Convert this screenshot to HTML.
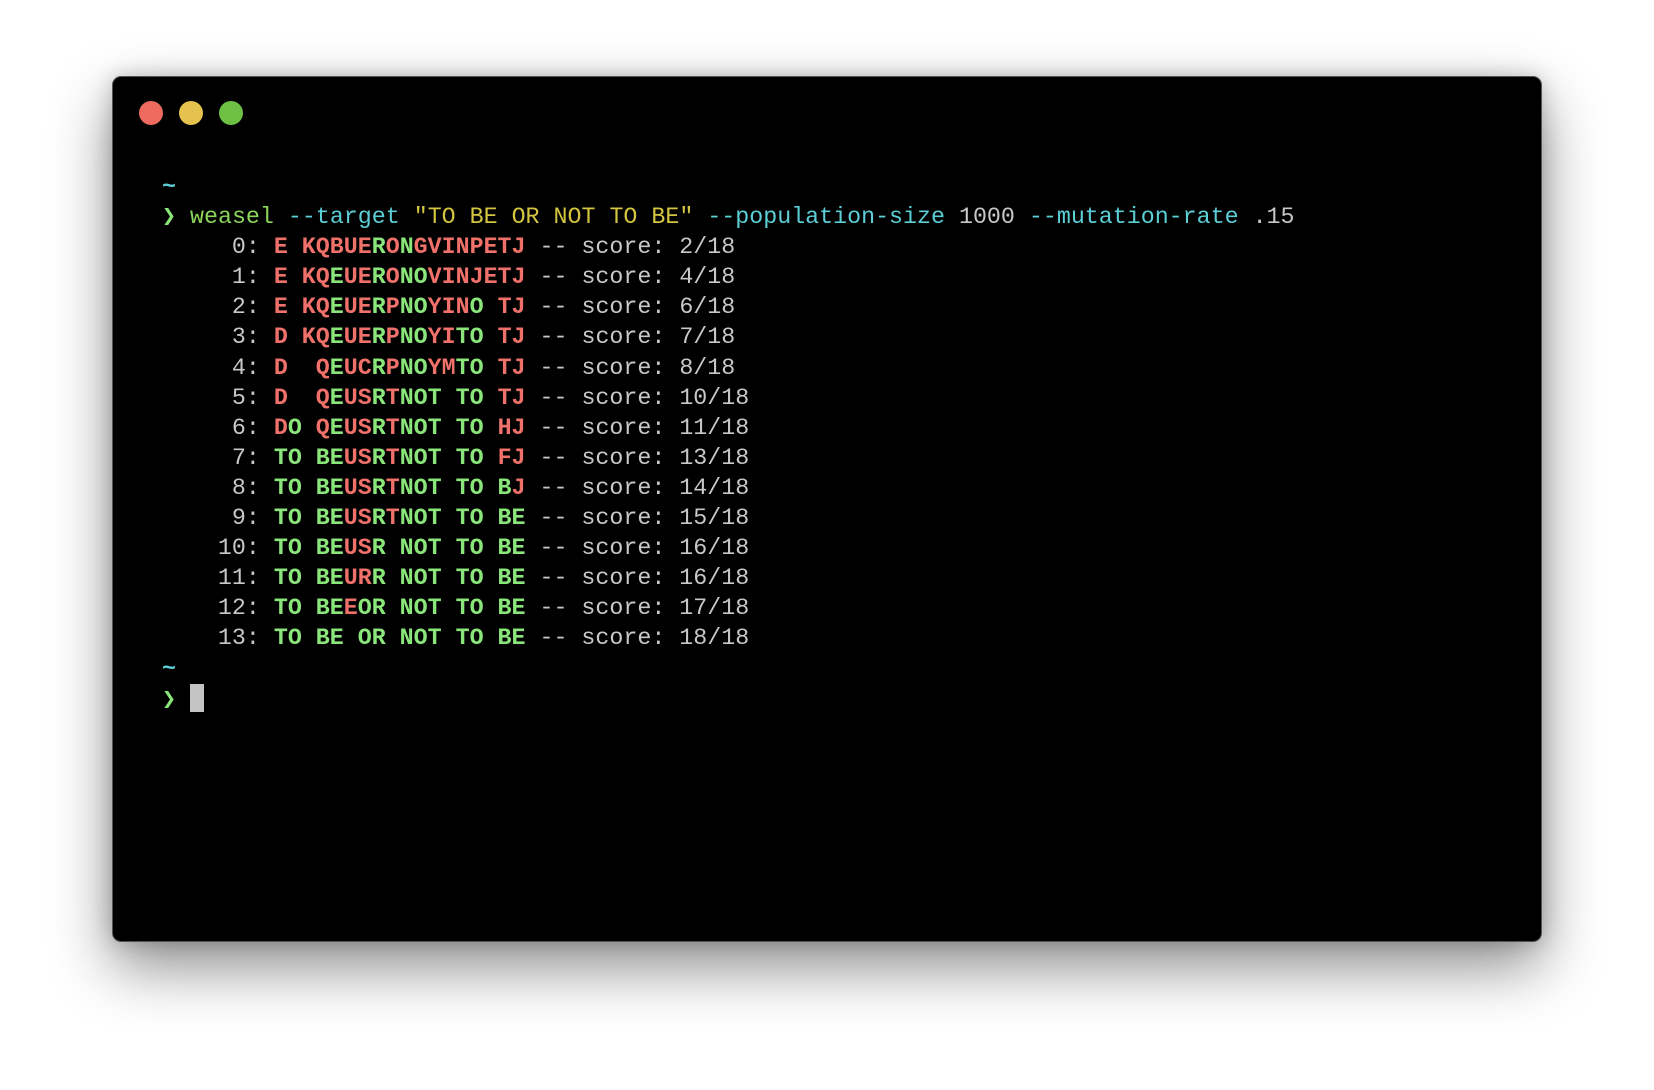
<!DOCTYPE html>
<html><head><meta charset="utf-8"><style>
html,body{margin:0;padding:0;background:#fff;width:1654px;height:1090px;overflow:hidden}
.win{position:absolute;left:112px;top:76px;width:1430px;height:866px;background:#000;border-radius:9px;border:1px solid #555;box-sizing:border-box;box-shadow:0 25px 60px rgba(0,0,0,0.45),0 0 20px rgba(0,0,0,0.2)}
.dot{position:absolute;top:101px;width:24px;height:24px;border-radius:50%}
pre{position:absolute;left:162px;top:172px;margin:0;font-family:"Liberation Mono",monospace;font-size:23.3px;line-height:30.1px;color:#c8c8c8}
.c{color:#5ccfd6}.t{color:#5ccfd6;font-weight:bold}.p{color:#8ae67a}.w{color:#8bd55a}.y{color:#d3c53f}
r{color:#f0706a;font-weight:bold}g{color:#8ae67a;font-weight:bold}
.cur{display:inline-block;width:14px;height:28px;background:#c4c4c4;vertical-align:-6px}
</style></head><body>
<div class="win"></div>
<div class="dot" style="left:139px;background:#ee6a5f"></div>
<div class="dot" style="left:179px;background:#e5c14e"></div>
<div class="dot" style="left:219px;background:#6ec044"></div>
<pre><span class="t">~</span>
<span class="p">❯</span> <span class="w">weasel</span> <span class="c">--target</span> <span class="y">"TO BE OR NOT TO BE"</span> <span class="c">--population-size</span> 1000 <span class="c">--mutation-rate</span> .15
     0: <r>E KQBUE</r><g>R</g><r>O</r><g>N</g><r>GVINPETJ</r> -- score: 2/18
     1: <r>E KQ</r><g>E</g><r>UE</r><g>R</g><r>O</r><g>NO</g><r>VINJETJ</r> -- score: 4/18
     2: <r>E KQ</r><g>E</g><r>UE</r><g>R</g><r>P</r><g>NO</g><r>YIN</r><g>O </g><r>TJ</r> -- score: 6/18
     3: <r>D KQ</r><g>E</g><r>UE</r><g>R</g><r>P</r><g>NO</g><r>YI</r><g>TO </g><r>TJ</r> -- score: 7/18
     4: <r>D  Q</r><g>E</g><r>UC</r><g>R</g><r>P</r><g>NO</g><r>YM</r><g>TO </g><r>TJ</r> -- score: 8/18
     5: <r>D  Q</r><g>E</g><r>US</r><g>R</g><r>T</r><g>NOT TO </g><r>TJ</r> -- score: 10/18
     6: <r>D</r><g>O </g><r>Q</r><g>E</g><r>US</r><g>R</g><r>T</r><g>NOT TO </g><r>HJ</r> -- score: 11/18
     7: <g>TO BE</g><r>US</r><g>R</g><r>T</r><g>NOT TO </g><r>FJ</r> -- score: 13/18
     8: <g>TO BE</g><r>US</r><g>R</g><r>T</r><g>NOT TO B</g><r>J</r> -- score: 14/18
     9: <g>TO BE</g><r>US</r><g>R</g><r>T</r><g>NOT TO BE</g> -- score: 15/18
    10: <g>TO BE</g><r>US</r><g>R NOT TO BE</g> -- score: 16/18
    11: <g>TO BE</g><r>UR</r><g>R NOT TO BE</g> -- score: 16/18
    12: <g>TO BE</g><r>E</r><g>OR NOT TO BE</g> -- score: 17/18
    13: <g>TO BE OR NOT TO BE</g> -- score: 18/18
<span class="t">~</span>
<span class="p">❯</span> <span class="cur"></span></pre>
</body></html>
